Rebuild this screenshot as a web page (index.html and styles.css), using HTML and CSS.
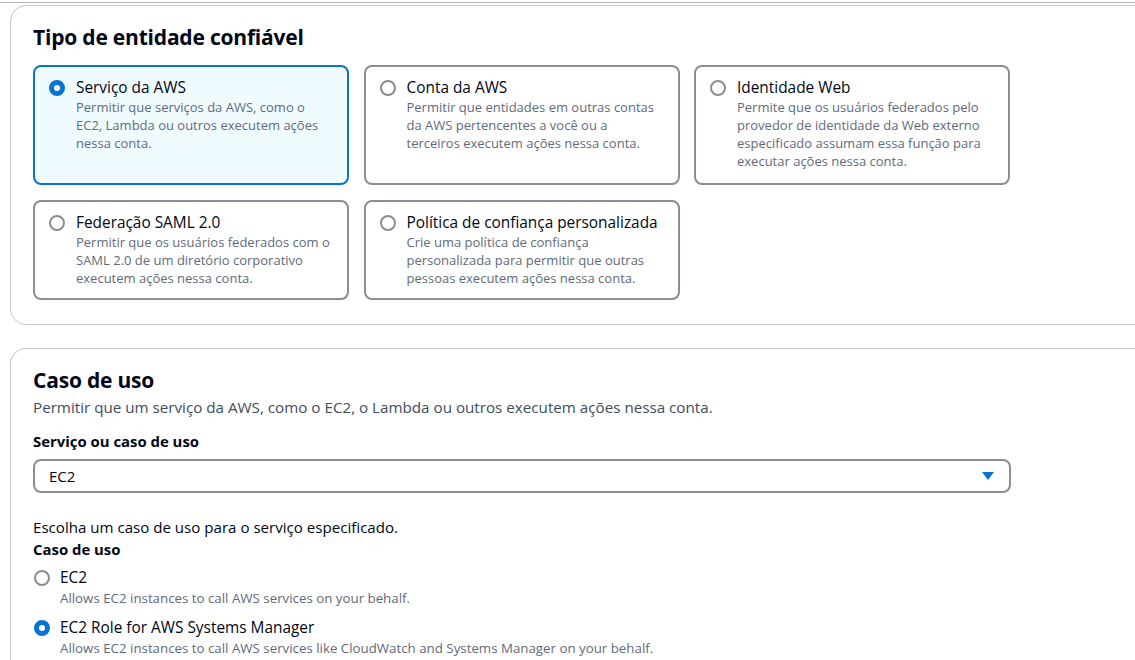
FILE: index.html
```html
<!DOCTYPE html>
<html lang="pt-BR">
<head>
<meta charset="utf-8">
<title>Tipo de entidade confiável</title>
<link rel="stylesheet" href="styles.css">
</head>
<body>
<div class="page">
  <div class="topline"></div>

  <section class="container first">
    <h2 class="heading">Tipo de entidade confiável</h2>
    <div class="tiles">
      <div class="tile selected">
        <span class="radio on"></span>
        <div class="tile-body">
          <div class="tile-title">Serviço da AWS</div>
          <div class="tile-desc">Permitir que serviços da AWS, como o EC2, Lambda ou outros executem ações nessa conta.</div>
        </div>
      </div>
      <div class="tile">
        <span class="radio"></span>
        <div class="tile-body">
          <div class="tile-title">Conta da AWS</div>
          <div class="tile-desc">Permitir que entidades em outras contas da AWS pertencentes a você ou a terceiros executem ações nessa conta.</div>
        </div>
      </div>
      <div class="tile">
        <span class="radio"></span>
        <div class="tile-body">
          <div class="tile-title">Identidade Web</div>
          <div class="tile-desc">Permite que os usuários federados pelo provedor de identidade da Web externo especificado assumam essa função para executar ações nessa conta.</div>
        </div>
      </div>
      <div class="tile">
        <span class="radio"></span>
        <div class="tile-body">
          <div class="tile-title">Federação SAML 2.0</div>
          <div class="tile-desc">Permitir que os usuários federados com o SAML 2.0 de um diretório corporativo executem ações nessa conta.</div>
        </div>
      </div>
      <div class="tile">
        <span class="radio"></span>
        <div class="tile-body">
          <div class="tile-title">Política de confiança personalizada</div>
          <div class="tile-desc">Crie uma política de confiança personalizada para permitir que outras pessoas executem ações nessa conta.</div>
        </div>
      </div>
    </div>
  </section>

  <section class="container second">
    <h2 class="heading">Caso de uso</h2>
    <p class="heading-desc">Permitir que um serviço da AWS, como o EC2, o Lambda ou outros executem ações nessa conta.</p>

    <div class="field">
      <div class="label">Serviço ou caso de uso</div>
      <div class="select">
        <span class="select-value">EC2</span>
        <svg class="caret" width="12" height="8" viewBox="0 0 12 8"><polygon points="0,0 12,0 6,8" fill="#0972d3"/></svg>
      </div>
    </div>

    <div class="usecase">
      <div class="usecase-intro">Escolha um caso de uso para o serviço especificado.</div>
      <div class="label">Caso de uso</div>
      <div class="options">
        <div class="option">
          <span class="radio"></span>
          <div class="option-body">
            <div class="option-title">EC2</div>
            <div class="option-desc">Allows EC2 instances to call AWS services on your behalf.</div>
          </div>
        </div>
        <div class="option">
          <span class="radio on"></span>
          <div class="option-body">
            <div class="option-title">EC2 Role for AWS Systems Manager</div>
            <div class="option-desc">Allows EC2 instances to call AWS services like CloudWatch and Systems Manager on your behalf.</div>
          </div>
        </div>
      </div>
    </div>
  </section>
</div>
</body>
</html>
```

FILE: styles.css
```css
* { box-sizing: border-box; }

html, body {
  margin: 0;
  padding: 0;
  background: #ffffff;
}

body {
  font-family: "Open Sans", "Noto Sans", Arial, sans-serif;
  color: #000716;
  font-size: 15px;
  overflow: hidden;
}

.page {
  width: 1135px;
  height: 660px;
  overflow: hidden;
}

.topline {
  height: 3px;
  border-bottom: 1px solid #b4b4bb;
  margin-bottom: 2px;
}

.container {
  margin-left: 10px;
  width: 1150px;
  border: 1px solid #c6c6cd;
  border-radius: 16px;
  padding: 18px 22px 0 22px;
}

.first {
  height: 320px;
}

.second {
  margin-top: 23px;
  border-bottom: none;
  border-radius: 16px 16px 0 0;
  height: 400px;
}

.heading {
  margin: 0;
  font-size: 21px;
  line-height: 26px;
  font-weight: 700;
  letter-spacing: -0.2px;
  color: #000716;
}

.tiles {
  margin-top: 15px;
  display: grid;
  grid-template-columns: repeat(3, 316px);
  grid-template-rows: 120px 100px;
  column-gap: 14.5px;
  row-gap: 15px;
}

.tile {
  display: flex;
  align-items: flex-start;
  gap: 11px;
  border: 2px solid #8c8c94;
  border-radius: 8px;
  padding: 11px 12px 12px 14px;
  background: #ffffff;
}

.tile.selected {
  border-color: #0972d3;
  background: #f0fbff;
}

.tile-body {
  width: 256px;
}

.radio {
  flex: none;
  width: 16px;
  height: 16px;
  border-radius: 50%;
  border: 2px solid #8c8c94;
  background: #ffffff;
  margin-top: 2px;
}

.radio.on {
  border: 5px solid #0972d3;
}

.tile-title {
  font-size: 15.4px;
  line-height: 20px;
  color: #000716;
}

.tile-desc {
  font-size: 13px;
  line-height: 18px;
  color: #5f6b7a;
}

.heading-desc {
  margin: 3px 0 0 0;
  font-size: 15.2px;
  line-height: 22px;
  color: #414d5c;
}

.field {
  margin-top: 12px;
}

.label {
  font-size: 14.9px;
  line-height: 22px;
  font-weight: 700;
  color: #000716;
}

.select {
  margin-top: 7px;
  width: 978px;
  height: 34px;
  border: 2px solid #8c8c94;
  border-radius: 8px;
  display: flex;
  align-items: center;
  justify-content: space-between;
  padding: 0 15px 0 14px;
}

.select-value {
  font-size: 15px;
  color: #000716;
}

.caret {
  display: block;
}

.usecase {
  margin-top: 23px;
}

.usecase-intro {
  font-size: 15.1px;
  line-height: 22px;
  color: #000716;
}

.options {
  margin-top: 7px;
  display: flex;
  flex-direction: column;
  gap: 10px;
}

.option {
  display: flex;
  align-items: flex-start;
  gap: 10px;
  padding-left: 1px;
}

.option .radio {
  margin-top: 3px;
}

.option-title {
  font-size: 15.4px;
  line-height: 22px;
  color: #000716;
}

.option-desc {
  font-size: 13.3px;
  line-height: 18px;
  color: #5f6b7a;
}
```
